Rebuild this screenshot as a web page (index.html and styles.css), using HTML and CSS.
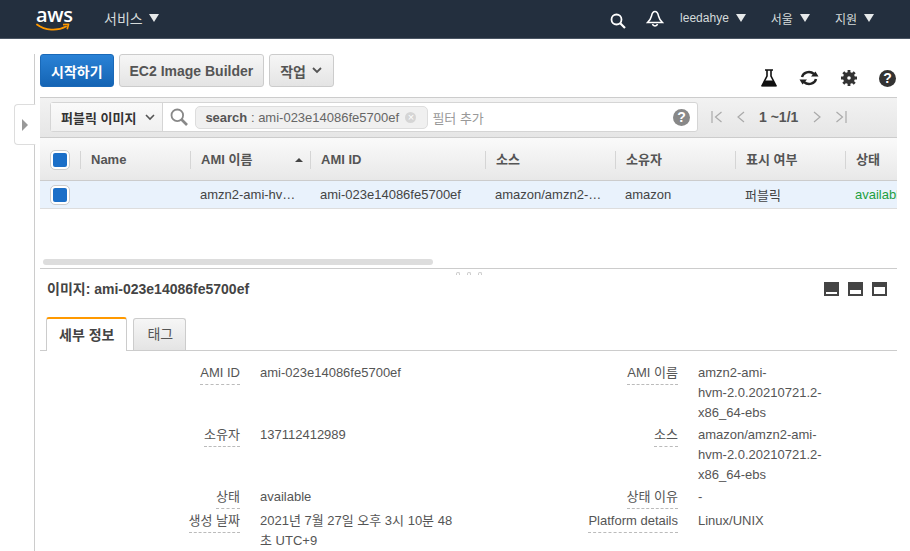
FILE: index.html
```html
<!DOCTYPE html>
<html lang="ko">
<head>
<meta charset="UTF-8">
<meta name="viewport" content="width=device-width, initial-scale=1.0">
<title>AMI</title>
<link rel="stylesheet" href="styles.css">
</head>
<body>
<header class="topbar">
    <div class="logo">
        <span class="logo-text">aws</span>
        <svg class="logo-smile" width="34" height="9" viewBox="0 0 34 9"><path d="M1 1.5C9 7.5 21 8.5 30 3.5" fill="none" stroke="#f90" stroke-width="1.8" stroke-linecap="round"/><path d="M27 1.6L32.6 1.2L31.2 6.2" fill="none" stroke="#f90" stroke-width="1.6" stroke-linejoin="round"/></svg>
    </div>
    <div class="nav-item nav-services">서비스 <i class="caret"></i></div>
    <div class="nav-right">
        <svg class="nav-search" width="16" height="16" viewBox="0 0 16 16"><circle cx="6.5" cy="6.5" r="5" fill="none" stroke="#fff" stroke-width="1.8"/><path d="M10.2 10.2L15 15" stroke="#fff" stroke-width="2.2"/></svg>
        <svg class="nav-bell" width="18" height="18" viewBox="0 0 18 18"><path d="M9 1.5C6.6 1.5 6 3.5 5.5 6C5 8.500 3.500 10.500 1.500 12.500H16.500C14.500 10.500 13 8.500 12.500 6C12 3.500 11.400 1.500 9 1.500Z" fill="none" stroke="#fff" stroke-width="1.500"/><path d="M6.500 14C7 16.500 11 16.500 11.500 14" fill="none" stroke="#fff" stroke-width="1.500"/></svg>
        <div class="nav-item nav-user">leedahye <i class="caret"></i></div>
        <div class="nav-item nav-region">서울 <i class="caret"></i></div>
        <div class="nav-item nav-support">지원 <i class="caret"></i></div>
    </div>
</header>

<div class="layout">
    <aside class="side">
        <div class="side-toggle"><i></i></div>
    </aside>
    <main class="content">
        <div class="actions">
            <button class="btn btn-primary">시작하기</button>
            <button class="btn">EC2 Image Builder</button>
            <button class="btn btn-menu">작업 <svg class="chev" width="10" height="7" viewBox="0 0 10 7"><path d="M1 1L5 5L9 1" fill="none" stroke="#555" stroke-width="1.800"/></svg></button>
            <div class="tools">
                <svg width="16" height="18" viewBox="0 0 16 18"><path d="M4 1H12M6 1.500V7L1.200 16.500H14.800L10 7V1.500" fill="none" stroke="#111" stroke-width="1.600"/><path d="M3.800 11.500H12.200L15.500 17.500H0.500Z" fill="#111"/></svg>
                <svg width="20" height="18" viewBox="0 0 20 18"><path d="M3 8C4 3.500 10.500 1 15 5" fill="none" stroke="#222" stroke-width="2.400"/><path d="M12 7.500H19.500L16.500 2.500Z" fill="#222"/><path d="M17 10C16 14.500 9.500 17 5 13" fill="none" stroke="#222" stroke-width="2.400"/><path d="M8 10.500H0.500L3.500 15.500Z" fill="#222"/></svg>
                <svg width="16" height="16" viewBox="0 0 16 16"><circle cx="8" cy="8" r="4.300" fill="none" stroke="#333" stroke-width="3.400"/><path d="M8 0V16M0 8H16M2.300 2.300L13.700 13.700M13.700 2.300L2.300 13.700" stroke="#333" stroke-width="2.800"/><circle cx="8" cy="8" r="1.800" fill="#fff"/></svg>
                <span class="help help-dark">?</span>
            </div>
        </div>

        <div class="filter-bar">
            <div class="search-box">
                <div class="search-type">퍼블릭 이미지 <svg class="chev" width="10" height="7" viewBox="0 0 10 7"><path d="M1 1L5 5L9 1" fill="none" stroke="#555" stroke-width="1.600"/></svg></div>
                <svg class="search-icon" width="18" height="18" viewBox="0 0 18 18"><circle cx="7.300" cy="7.300" r="5.800" fill="none" stroke="#888" stroke-width="1.800"/><path d="M11.500 11.500L17 17" stroke="#888" stroke-width="2.600"/></svg>
                <div class="token"><span><b>search</b> : ami-023e14086fe5700ef</span><span class="token-x">×</span></div>
                <span class="placeholder">필터 추가</span>
                <span class="help help-gray">?</span>
            </div>
            <div class="pager">
                <svg width="12" height="12" viewBox="0 0 12 12"><path d="M1 0V12M10.500 1L4.500 6L10.500 11" fill="none" stroke="#aaa" stroke-width="1.200"/></svg>
                <svg width="9" height="12" viewBox="0 0 9 12"><path d="M8 1L2 6L8 11" fill="none" stroke="#aaa" stroke-width="1.200"/></svg>
                <span class="pager-text">1 ~1/1</span>
                <svg width="9" height="12" viewBox="0 0 9 12"><path d="M1 1L7 6L1 11" fill="none" stroke="#aaa" stroke-width="1.200"/></svg>
                <svg width="12" height="12" viewBox="0 0 12 12"><path d="M11 0V12M1.500 1L7.500 6L1.500 11" fill="none" stroke="#aaa" stroke-width="1.200"/></svg>
            </div>
        </div>

        <div class="table-head">
            <div class="cell-check"><span class="check"></span></div>
            <div class="th">Name</div>
            <div class="th th-sorted">AMI 이름<i class="sort-up"></i></div>
            <div class="th">AMI ID</div>
            <div class="th">소스</div>
            <div class="th">소유자</div>
            <div class="th">표시 여부</div>
            <div class="th">상태</div>
        </div>
        <div class="table-row">
            <div class="cell-check"><span class="check"></span></div>
            <div class="td"></div>
            <div class="td">amzn2-ami-hv…</div>
            <div class="td">ami-023e14086fe5700ef</div>
            <div class="td">amazon/amzn2-…</div>
            <div class="td">amazon</div>
            <div class="td">퍼블릭</div>
            <div class="td td-status">available</div>
        </div>

        <div class="table-space">
            <div class="scroll-thumb"></div>
        </div>

        <div class="resizer"><i></i><i></i><i></i></div>

        <div class="detail-head">
            <div class="detail-title">이미지: ami-023e14086fe5700ef</div>
            <div class="pane-btns">
                <span class="pane pane-small"></span>
                <span class="pane pane-mid"></span>
                <span class="pane pane-big"></span>
            </div>
        </div>

        <div class="tabs">
            <div class="tab tab-active">세부 정보</div>
            <div class="tab">태그</div>
        </div>

        <div class="details">
            <div class="label"><span>AMI ID</span></div>
            <div class="value">ami-023e14086fe5700ef</div>
            <div class="label"><span>AMI 이름</span></div>
            <div class="value">amzn2-ami-<br>hvm-2.0.20210721.2-<br>x86_64-ebs</div>

            <div class="label"><span>소유자</span></div>
            <div class="value">137112412989</div>
            <div class="label"><span>소스</span></div>
            <div class="value">amazon/amzn2-ami-<br>hvm-2.0.20210721.2-<br>x86_64-ebs</div>

            <div class="label"><span>상태</span></div>
            <div class="value">available</div>
            <div class="label"><span>상태 이유</span></div>
            <div class="value">-</div>

            <div class="label"><span>생성 날짜</span></div>
            <div class="value">2021년 7월 27일 오후 3시 10분 48 초 UTC+9</div>
            <div class="label"><span>Platform details</span></div>
            <div class="value">Linux/UNIX</div>
        </div>
    </main>
</div>
</body>
</html>
```

FILE: styles.css
```css
html, body {
    height: 100%;
}

body {
    margin: 0;
    font-family: "Liberation Sans", "Noto Sans CJK KR", sans-serif;
    font-size: 13px;
    color: #444;
    background-color: #fff;
    overflow: hidden;
}

.topbar {
    display: flex;
    align-items: center;
    height: 38px;
    padding-left: 36px;
    background-color: #232f3e;
    border-bottom: 1px solid #4a5563;
    color: #d5dbdb;
}

.logo {
    position: relative;
    width: 34px;
    height: 30px;
    margin-right: 34px;
}

.logo-text {
    position: absolute;
    left: 0;
    top: -1px;
    font-family: "Open Sans", sans-serif;
    font-size: 20px;
    font-weight: 600;
    line-height: 24px;
    letter-spacing: -0.3px;
    color: #fff;
}

.logo-smile {
    position: absolute;
    left: 0;
    top: 19px;
}

.nav-item {
    display: flex;
    align-items: center;
    gap: 6px;
    padding-bottom: 2px;
    white-space: nowrap;
    font-size: 12px;
}

.nav-services {
    gap: 5px;
    font-size: 14px;
}

.caret {
    display: inline-block;
    width: 0;
    height: 0;
    margin-left: 1px;
    border-left: 5px solid transparent;
    border-right: 5px solid transparent;
    border-top: 8px solid #e6e9ea;
}

.nav-right {
    display: flex;
    align-items: center;
    margin-left: auto;
    padding-right: 36px;
}

.nav-search {
    margin-right: 20px;
    margin-top: 3px;
}

.nav-bell {
    margin-right: 16px;
}

.nav-user {
    margin-right: 25px;
}

.nav-region {
    margin-right: 25px;
}

.layout {
    display: flex;
    height: 512px;
}

.side {
    position: relative;
    flex: none;
    width: 34px;
    margin-top: 15px;
    border-right: 1px solid #ccc;
}

.side-toggle {
    position: absolute;
    left: 14px;
    top: 50px;
    display: flex;
    align-items: center;
    justify-content: center;
    width: 20px;
    height: 39px;
    background-color: #fff;
    border: 1px solid #ddd;
    border-right: 1px solid #fff;
    border-radius: 4px 0 0 4px;
    margin-right: -1px;
}

.side-toggle i {
    width: 0;
    height: 0;
    border-top: 6px solid transparent;
    border-bottom: 6px solid transparent;
    border-left: 6px solid #999;
}

.content {
    flex: none;
    width: 857px;
    margin-left: 5px;
    padding-top: 15px;
}

.actions {
    display: flex;
    align-items: flex-start;
    gap: 5px;
    height: 43px;
}

.btn {
    display: flex;
    align-items: center;
    gap: 6px;
    height: 33px;
    padding: 0 10px;
    font-family: inherit;
    font-size: 14px;
    font-weight: bold;
    color: #555;
    background: linear-gradient(#f6f6f6, #e4e4e4);
    border: 1px solid #ccc;
    border-radius: 3px;
}

.btn-primary {
    color: #fff;
    background: linear-gradient(#2a82d6, #1464b4);
    border-color: #1a69b8;
}

.btn-menu {
    padding-right: 11px;
}

.tools {
    display: flex;
    align-items: center;
    gap: 22px;
    margin-left: auto;
    margin-top: 15px;
    margin-right: 1px;
}

.help {
    display: inline-block;
    border-radius: 50%;
    color: #fff;
    font-weight: bold;
    text-align: center;
}

.help-dark {
    width: 17px;
    height: 17px;
    font-size: 14px;
    line-height: 17px;
    background-color: #333;
}

.help-gray {
    width: 17px;
    height: 17px;
    margin-left: auto;
    margin-right: 7px;
    font-size: 14px;
    line-height: 17px;
    background-color: #888;
}

.filter-bar {
    display: flex;
    align-items: center;
    height: 38px;
    padding: 0 0 1px 10px;
    background: linear-gradient(#f2f2f2, #e6e6e6);
    border-top: 1px solid #ccc;
    border-bottom: 1px solid #ccc;
}

.search-box {
    display: flex;
    align-items: center;
    width: 646px;
    height: 28px;
    background-color: #fff;
    border: 1px solid #d5d5d5;
    border-radius: 3px;
}

.search-type {
    display: flex;
    align-items: center;
    gap: 9px;
    height: 28px;
    padding: 0 7px 0 10px;
    font-size: 13px;
    font-weight: bold;
    color: #333;
    background: linear-gradient(#fafafa, #f0f0f0);
    border-right: 1px solid #d5d5d5;
    white-space: nowrap;
}

.search-icon {
    margin: 0 7px;
}

.token {
    display: flex;
    align-items: center;
    justify-content: space-between;
    box-sizing: border-box;
    width: 233px;
    height: 23px;
    padding: 0 11px 0 9px;
    background-color: #f0f0f0;
    border: 1px solid #ddd;
    border-radius: 5px;
    white-space: pre;
    color: #666;
}

.token b {
    color: #555;
}

.token-x {
    width: 11px;
    height: 11px;
    border-radius: 50%;
    background-color: #d5d5d5;
    color: #fff;
    font-size: 11px;
    line-height: 11px;
    text-align: center;
}

.placeholder {
    margin-left: 4px;
    color: #999;
    font-size: 13px;
}

.pager {
    display: flex;
    align-items: center;
    gap: 13px;
    margin-left: 13px;
}

.pager-text {
    margin: 0 2px 0 1px;
    font-size: 14px;
    font-weight: bold;
    color: #555;
}

.table-head,
.table-row {
    display: grid;
    grid-template-columns: 40px 110px 120px 175px 130px 120px 110px 52px;
    overflow: hidden;
}

.table-head {
    height: 43px;
    padding-top: 2px;
    box-sizing: border-box;
    align-items: center;
    background: linear-gradient(#fafafa, #e8e8e8);
    border-bottom: 1px solid #ccc;
}

.table-row {
    height: 27px;
    align-items: center;
    background-color: #e9f2fc;
    border-bottom: 1px solid #ddd;
}

.cell-check {
    display: flex;
    justify-content: center;
}

.check {
    display: block;
    width: 14px;
    height: 14px;
    background-color: #1b6fc8;
    border: 2px solid #fff;
    border-radius: 4px;
    outline: 1px solid #ccc;
}

.th {
    position: relative;
    height: 18px;
    padding-left: 10px;
    font-weight: bold;
    line-height: 18px;
    color: #555;
    white-space: nowrap;
    border-left: 1px solid #d5d5d5;
}

.th-sorted {
    display: flex;
}

.sort-up {
    position: absolute;
    right: 7px;
    top: 7px;
    width: 0;
    height: 0;
    border-left: 4px solid transparent;
    border-right: 4px solid transparent;
    border-bottom: 4px solid #444;
}

.td {
    padding-left: 10px;
    white-space: nowrap;
    overflow: hidden;
    color: #444;
}

.td-status {
    color: #1d9f3f;
}

.table-space {
    height: 59px;
    position: relative;
    border-bottom: 1px solid #ccc;
}

.scroll-thumb {
    position: absolute;
    left: 3px;
    top: 50px;
    width: 390px;
    height: 6px;
    background-color: #ddd;
    border-radius: 3px;
}

.resizer {
    display: flex;
    justify-content: center;
    gap: 7px;
    height: 6px;
    padding-top: 3px;
}

.resizer i {
    width: 4px;
    height: 3px;
    border: 1px solid #ccc;
    border-bottom: none;
    border-radius: 2px 2px 0 0;
    box-sizing: border-box;
}

.detail-head {
    display: flex;
    align-items: center;
    justify-content: space-between;
    height: 20px;
    padding: 0 10px 0 7px;
}

.detail-title {
    font-size: 14px;
    font-weight: bold;
    color: #444;
}

.pane-btns {
    display: flex;
    gap: 9px;
    margin-top: 1px;
}

.pane {
    position: relative;
    display: block;
    width: 15px;
    height: 14px;
    background-color: #444;
}

.pane::after {
    content: "";
    position: absolute;
    left: 2px;
    right: 2px;
    bottom: 2px;
    background-color: #fff;
}

.pane-small::after {
    height: 2px;
}

.pane-mid::after {
    height: 4px;
}

.pane-big::after {
    height: 7px;
}

.tabs {
    display: flex;
    align-items: flex-end;
    gap: 6px;
    height: 34px;
    margin-top: 18px;
    padding-left: 6px;
    border-bottom: 1px solid #ccc;
}

.tab {
    height: 31px;
    padding: 0 12px 0 13px;
    font-size: 14px;
    line-height: 31px;
    color: #555;
    background: linear-gradient(#f6f6f6, #e4e4e4);
    border: 1px solid #ccc;
    border-bottom: none;
    border-radius: 3px 3px 0 0;
}

.tab-active {
    height: 32px;
    margin-bottom: -1px;
    padding: 0 12px;
    font-weight: bold;
    line-height: 33px;
    color: #444;
    background: #fff;
    border-top: 2px solid #f90;
}

.details {
    display: grid;
    grid-template-columns: 200px 200px 198px 170px;
    column-gap: 20px;
    margin-top: 12px;
    line-height: 20px;
    color: #555;
}

.label {
    text-align: right;
    padding-bottom: 2px;
}

.label span {
    display: inline-block;
    border-bottom: 1px dashed #bbb;
    padding-bottom: 1px;
}

.value {
    padding-bottom: 2px;
}
```
